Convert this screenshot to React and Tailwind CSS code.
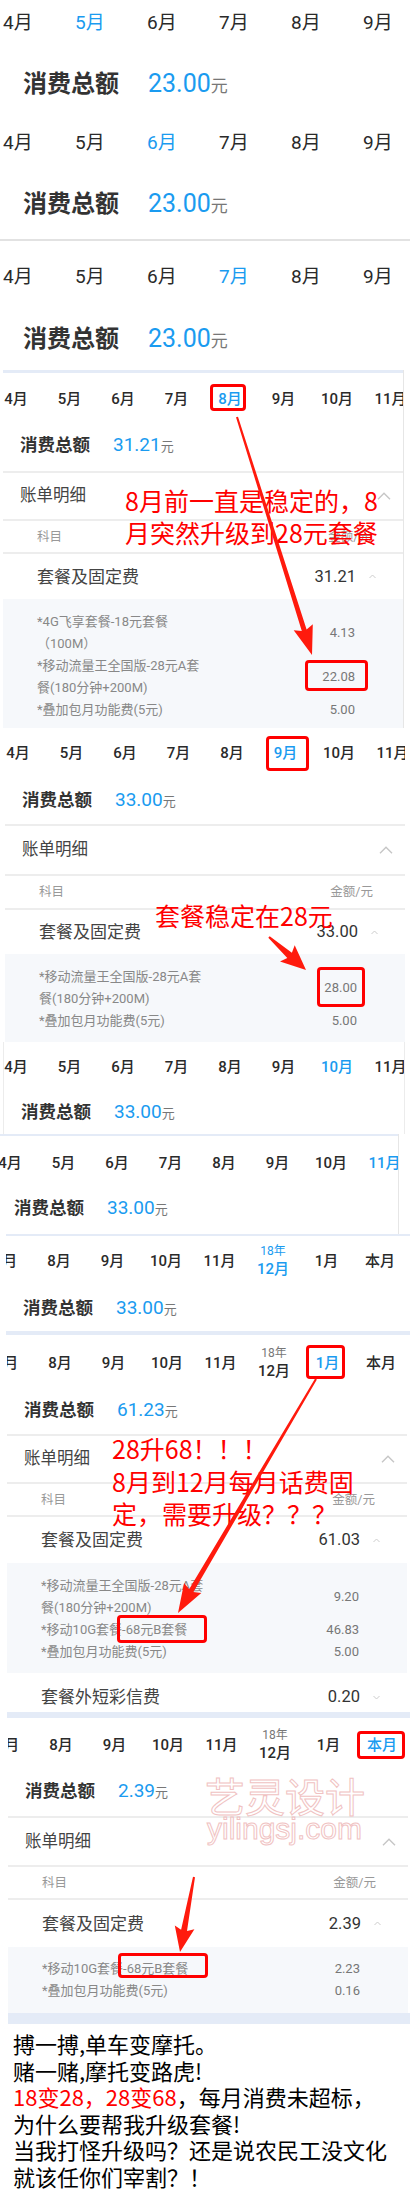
import React from 'react';

const BLUE = 'text-[#1a9bf0]';

function Arrow({ x1, y1, x2, y2, w1 = 2, w2 = 5, hl = 24, hw = 10 }) {
  const dx = x2 - x1;
  const dy = y2 - y1;
  const L = Math.hypot(dx, dy);
  const ux = dx / L;
  const uy = dy / L;
  const nx = -uy;
  const ny = ux;
  const bx = x2 - ux * hl;
  const by = y2 - uy * hl;
  const pts = [
    [x1 + (nx * w1) / 2, y1 + (ny * w1) / 2],
    [bx + (nx * w2) / 2, by + (ny * w2) / 2],
    [bx + nx * hw - ux * 3, by + ny * hw - uy * 3],
    [x2, y2],
    [bx - nx * hw - ux * 3, by - ny * hw - uy * 3],
    [bx - (nx * w2) / 2, by - (ny * w2) / 2],
    [x1 - (nx * w1) / 2, y1 - (ny * w1) / 2],
  ];
  return <polygon points={pts.map((p) => p.map((v) => v.toFixed(1)).join(',')).join(' ')} fill="#ff1a0d" />;
}

function ChevUp() {
  return (
    <svg width="14" height="8" viewBox="0 0 14 8" className="shrink-0">
      <polyline points="1,7.2 7,1.2 13,7.2" fill="none" stroke="#c6c6c6" strokeWidth="1.4" />
    </svg>
  );
}
function ChevSmall({ down }) {
  return (
    <svg width="7" height="5" viewBox="0 0 7 5" className="shrink-0">
      <polyline points={down ? '0.5,1 3.5,4 6.5,1' : '0.5,4 3.5,1 6.5,4'} fill="none" stroke="#cccccc" strokeWidth="1" />
    </svg>
  );
}

function BigMonths({ active }) {
  const m = ['4月', '5月', '6月', '7月', '8月', '9月'];
  return (
    <div className="flex h-[46px] items-center pl-[3px]">
      {m.map((t, i) => (
        <div key={t} className={`w-[72px] shrink-0 text-[19px] leading-[24px] ${i === active ? 'text-[#1a9bf0]' : 'text-[#2a2a2a]'}`}>
          {t}
        </div>
      ))}
    </div>
  );
}

function BigTotal({ mt }) {
  return (
    <div className={`flex h-[40px] items-center pl-[23px] ${mt}`}>
      <div className="flex items-baseline">
        <span className="text-[24px] font-bold leading-[30px] text-[#333]">消费总额</span>
        <span className="ml-[29px] text-[25px] leading-[30px] text-[#1a9bf0]">23.00</span>
        <span className="text-[17px] leading-[30px] text-[#777]">元</span>
      </div>
    </div>
  );
}

const M1 = ['4月', '5月', '6月', '7月', '8月', '9月', '10月', '11月'];

function Months({ list, active, h, ml, year }) {
  return (
    <div className={`flex items-center ${h} ${ml}`}>
      {list.map((t, i) => {
        const on = i === active;
        if (t === 'Y') {
          return (
            <div key={i} className="flex w-[53.5px] shrink-0 flex-col items-center">
              <span className={`text-[12px] leading-[16px] ${on ? 'text-[#1a9bf0]' : 'text-[#777]'}`}>18年</span>
              <span className={`text-[15px] font-medium leading-[20px] ${on ? 'text-[#1a9bf0]' : 'text-[#2a2a2a]'}`}>12月</span>
            </div>
          );
        }
        return (
          <div key={i} className="flex w-[53.5px] shrink-0 justify-center">
            <span className={`whitespace-nowrap text-[15px] font-medium leading-[20px] ${on ? 'text-[#1a9bf0]' : 'text-[#2a2a2a]'}`}>{t}</span>
          </div>
        );
      })}
    </div>
  );
}

const M2 = ['7月', '8月', '9月', '10月', '11月', 'Y', '1月', '本月'];

function SmallTotal({ amount, h }) {
  return (
    <div className={`flex items-center pl-[17px] ${h}`}>
      <div className="flex items-baseline">
        <span className="text-[17.5px] font-bold leading-[24px] text-[#333]">消费总额</span>
        <span className="ml-[23px] text-[19px] leading-[24px] text-[#1a9bf0]">{amount}</span>
        <span className="text-[13px] leading-[24px] text-[#777]">元</span>
      </div>
    </div>
  );
}

function Line() {
  return <div className="h-[2px] bg-[#ededed]" />;
}

function BillHead({ h }) {
  return (
    <div className={`flex items-center justify-between pl-[17px] pr-[12px] ${h}`}>
      <span className="text-[16.5px] leading-[22px] text-[#444]">账单明细</span>
      <ChevUp />
    </div>
  );
}

function Kemu({ h }) {
  return (
    <div className={`flex items-center justify-between pl-[34px] pr-[32px] text-[12.5px] leading-[16px] text-[#999] ${h}`}>
      <span>科目</span>
      <span>金额/元</span>
    </div>
  );
}

function Pkg({ h, value, label = '套餐及固定费', down }) {
  return (
    <div className={`flex items-center justify-between pl-[34px] pr-[27px] ${h}`}>
      <span className="text-[17px] leading-[22px] text-[#444]">{label}</span>
      <div className="flex items-center gap-[13px]">
        <span className="text-[16.5px] leading-[22px] text-[#333]">{value}</span>
        <ChevSmall down={down} />
      </div>
    </div>
  );
}

function Items({ rows, pad }) {
  return (
    <div className={`bg-[#f6f8fb] pl-[34px] pr-[48px] ${pad}`}>
      {rows.map((r, i) => (
        <div key={i} className="flex items-center justify-between">
          <div className="whitespace-nowrap text-[13px] leading-[22px] text-[#888]">
            {r[0].map((l, j) => (
              <div key={j}>{l}</div>
            ))}
          </div>
          <span className="text-[13px] leading-[22px] text-[#777]">{r[1]}</span>
        </div>
      ))}
    </div>
  );
}

function Box({ cls }) {
  return <div className={`absolute rounded-[4px] border-[3px] border-[#ff0000] ${cls}`} />;
}

export default function App() {
  return (
    <div className="relative w-[410px] overflow-hidden bg-white font-['Roboto','Noto_Sans_CJK_SC',sans-serif]">
      {/* A */}
      <div className="h-[120px]">
        <BigMonths active={1} />
        <BigTotal mt="mt-[19px]" />
      </div>
      {/* B */}
      <div className="h-[119px]">
        <BigMonths active={2} />
        <BigTotal mt="mt-[19px]" />
      </div>
      <div className="h-[2px] bg-[#e2e2e2]" />
      {/* C */}
      <div className="h-[129px] pt-[13px]">
        <BigMonths active={3} />
        <BigTotal mt="mt-[20px]" />
      </div>

      {/* D : August */}
      <div className="ml-[3px] w-[401px] overflow-hidden border-r border-[#e6e6e6]">
        <div className="h-[3px] bg-[#e4ebf7]" />
        <Months list={M1} active={4} h="h-[52px]" ml="ml-[-13.75px]" />
        <SmallTotal amount="31.21" h="h-[46px] pb-[4px]" />
        <Line />
        <BillHead h="h-[46px]" />
        <Line />
        <Kemu h="h-[31px]" />
        <Line />
        <Pkg h="h-[45px]" value="31.21" />
        <Items
          pad="pt-[12px] pb-[7px]"
          rows={[
            [['*4G飞享套餐-18元套餐', '（100M）'], '4.13'],
            [['*移动流量王全国版-28元A套', '餐(180分钟+200M)'], '22.08'],
            [['*叠加包月功能费(5元)'], '5.00'],
          ]}
        />
      </div>

      {/* E : September */}
      <div className="ml-[5px] w-[400px] overflow-hidden">
        <Months list={M1} active={5} h="h-[50px]" ml="ml-[-13.75px]" />
        <SmallTotal amount="33.00" h="h-[46px]" />
        <Line />
        <BillHead h="h-[48px]" />
        <Line />
        <Kemu h="h-[32px]" />
        <Line />
        <Pkg h="h-[44px]" value="33.00" />
        <Items
          pad="pt-[12px] pb-[10px]"
          rows={[
            [['*移动流量王全国版-28元A套', '餐(180分钟+200M)'], '28.00'],
            [['*叠加包月功能费(5元)'], '5.00'],
          ]}
        />
      </div>

      {/* F : October */}
      <div className="ml-[3px] w-[402px] overflow-hidden border-x border-[#ececec]">
        <Months list={M1} active={6} h="h-[50px]" ml="ml-[-14.75px]" />
        <SmallTotal amount="33.00" h="h-[42px]" />
      </div>

      {/* G : November */}
      <div className="ml-[-3px] w-[402px] overflow-hidden border-r border-[#e6e6e6]">
        <div className="h-[2px] bg-[#e4ebf7]" />
        <Months list={M1} active={7} h="h-[54px]" ml="ml-[-13.75px]" />
        <SmallTotal amount="33.00" h="h-[38px]" />
        <div className="h-[6px]" />
      </div>

      {/* H : December */}
      <div className="ml-[6px] w-[404px] overflow-hidden">
        <div className="h-[2px] bg-[#e4ebf7]" />
        <Months list={M2} active={5} h="h-[50px]" ml="ml-[-27.25px]" />
        <SmallTotal amount="33.00" h="h-[45px]" />
        <div className="h-[4px] bg-[#e4ebf7]" />
      </div>

      {/* I : January */}
      <div className="ml-[7px] w-[400px] overflow-hidden">
        <Months list={M2} active={6} h="h-[56px]" ml="ml-[-27.25px]" />
        <SmallTotal amount="61.23" h="h-[43px] pb-[4px]" />
        <Line />
        <BillHead h="h-[46px]" />
        <Line />
        <Kemu h="h-[31px]" />
        <Line />
        <Pkg h="h-[46px]" value="61.03" />
        <Items
          pad="pt-[12px] pb-[10px]"
          rows={[
            [['*移动流量王全国版-28元A套', '餐(180分钟+200M)'], '9.20'],
            [['*移动10G套餐-68元B套餐'], '46.83'],
            [['*叠加包月功能费(5元)'], '5.00'],
          ]}
        />
        <div className="h-[39px] pt-[14px]">
          <div className="flex items-center justify-between pl-[34px] pr-[27px]">
            <span className="text-[17px] leading-[20px] text-[#444]">套餐外短彩信费</span>
            <div className="flex items-center gap-[13px]">
              <span className="text-[16.5px] leading-[20px] text-[#333]">0.20</span>
              <ChevSmall down />
            </div>
          </div>
        </div>
      </div>
      <div className="ml-[7px] h-[6px] w-[403px] bg-[#e4ebf7]" />

      {/* J : current month */}
      <div className="ml-[8px] w-[400px] overflow-hidden">
        <Months list={M2} active={7} h="h-[54px]" ml="ml-[-27.25px]" />
        <SmallTotal amount="2.39" h="h-[44px] pb-[4px]" />
        <Line />
        <BillHead h="h-[47px]" />
        <Line />
        <Kemu h="h-[31px]" />
        <Line />
        <Pkg h="h-[47px]" value="2.39" />
        <Items
          pad="pt-[11px] pb-[11px]"
          rows={[
            [['*移动10G套餐-68元B套餐'], '2.23'],
            [['*叠加包月功能费(5元)'], '0.16'],
          ]}
        />
      </div>
      <div className="ml-[8px] h-[11px] w-[402px] bg-[#e4ebf7]" />

      {/* K : text */}
      <div className="h-[176px] pl-[13px] pt-[6px] font-['Noto_Sans_CJK_SC',sans-serif] text-[22px] leading-[26.6px] text-black">
        <p>搏一搏,单车变摩托。</p>
        <p>赌一赌,摩托变路虎!</p>
        <p>
          <span className="text-[#ff0000]">18变28，28变68</span>，每月消费未超标，
        </p>
        <p>为什么要帮我升级套餐!</p>
        <p>当我打怪升级吗？还是说农民工没文化</p>
        <p>就该任你们宰割？！</p>
      </div>

      {/* Overlays: annotations */}
      <div className="pointer-events-none absolute left-0 top-0 h-[2200px] w-[410px]">
        <div className="absolute left-[205px] top-[1771px] whitespace-nowrap font-['Noto_Sans_CJK_SC',sans-serif] text-[40px] leading-[48px] text-transparent [-webkit-text-stroke:1px_#f0c2c2]">
          艺灵设计
        </div>
        <div className="absolute left-[207px] top-[1814px] whitespace-nowrap font-['Liberation_Sans',sans-serif] text-[30px] leading-[30px] text-transparent [-webkit-text-stroke:1px_#f0c2c2]">
          yilingsj.com
        </div>

        <Box cls="left-[210px] top-[384px] w-[36px] h-[27px]" />
        <Box cls="left-[305px] top-[660px] w-[63px] h-[31px]" />
        <Box cls="left-[266px] top-[736px] w-[43px] h-[35px]" />
        <Box cls="left-[317px] top-[967px] w-[48px] h-[40px]" />
        <Box cls="left-[306px] top-[1345px] w-[39px] h-[34px]" />
        <Box cls="left-[117px] top-[1615px] w-[90px] h-[28px]" />
        <Box cls="left-[357px] top-[1731px] w-[48px] h-[28px]" />
        <Box cls="left-[118px] top-[1953px] w-[90px] h-[25px]" />

        <div className="absolute left-[125px] top-[484px] whitespace-nowrap font-['Noto_Sans_CJK_SC',sans-serif] text-[25px] leading-[32px] text-[#ff0000]">
          8月前一直是稳定的，8
          <br />
          月突然升级到28元套餐
        </div>
        <div className="absolute left-[155px] top-[899px] whitespace-nowrap font-['Noto_Sans_CJK_SC',sans-serif] text-[25px] leading-[32px] text-[#ff0000]">
          套餐稳定在28元
        </div>
        <div className="absolute left-[112px] top-[1432px] whitespace-nowrap font-['Noto_Sans_CJK_SC',sans-serif] text-[25px] leading-[32.5px] text-[#ff0000]">
          28升68！！！
          <br />
          8月到12月每月话费固
          <br />
          定，需要升级？？？
        </div>

        <svg className="absolute left-0 top-0" width="410" height="2200" viewBox="0 0 410 2200">
          <Arrow x1={237} y1={417} x2={312} y2={655} w1={2} w2={5} hl={26} hw={10} />
          <Arrow x1={269} y1={937} x2={306} y2={970} w1={2} w2={7} hl={22} hw={11} />
          <Arrow x1={316} y1={1379} x2={178} y2={1613} w1={2} w2={5} hl={26} hw={10} />
          <Arrow x1={194} y1={1877} x2={180} y2={1952} w1={2} w2={6} hl={22} hw={10} />
        </svg>
      </div>
    </div>
  );
}
